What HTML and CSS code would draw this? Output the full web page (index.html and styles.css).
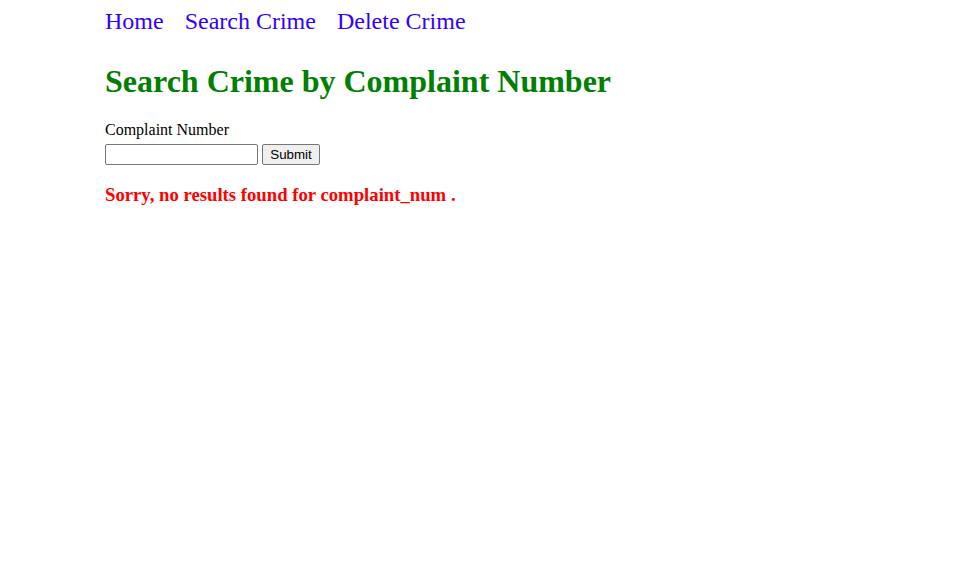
FILE: index.html
```html
<!DOCTYPE html>
<html>
<head>
<meta charset="utf-8">
<title>Search Crime</title>
<link rel="stylesheet" href="styles.css">
</head>
<body>
<div class="container">
  <nav class="nav">
    <a class="nav-link" href="#">Home</a>
    <a class="nav-link" href="#">Search Crime</a>
    <a class="nav-link" href="#">Delete Crime</a>
  </nav>
  <h1 class="title">Search Crime by Complaint Number</h1>
  <form class="form">
    <label class="label" for="cn">Complaint Number</label>
    <div class="row">
      <input class="text-input" type="text" id="cn" name="complaint_num">
      <button class="btn" type="submit">Submit</button>
    </div>
  </form>
  <h3 class="error">Sorry, no results found for complaint_num .</h3>
</div>
</body>
</html>
```

FILE: styles.css
```css
body {
  margin: 8px;
  font-family: "Liberation Serif", "Times New Roman", serif;
  font-size: 16px;
  color: #000;
  background: #fff;
}
.container {
  max-width: 746px;
  margin: 0 auto;
}
.nav {
  display: flex;
  gap: 21px;
  font-size: 24px;
}
.nav-link {
  color: #3300ff;
  text-decoration: none;
}
.title {
  color: #008000;
  font-size: 32px;
  font-weight: bold;
  margin: 28px 0 21px;
}
.form {
  margin: 0;
}
.label {
  display: block;
  font-size: 16px;
  line-height: 18px;
}
.row {
  display: flex;
  align-items: center;
  gap: 4px;
  margin-top: 5px;
}
.text-input {
  font-family: "Liberation Sans", Arial, sans-serif;
  font-size: 13.33px;
  width: 153px;
  height: 21px;
  box-sizing: border-box;
  border: 1px solid #767676;
  border-radius: 2px;
  padding: 1px 2px;
  margin: 0;
}
.btn {
  font-family: "Liberation Sans", Arial, sans-serif;
  font-size: 13.33px;
  width: 58px;
  height: 21px;
  box-sizing: border-box;
  padding: 1px 4px;
  margin: 0;
  border: 1px solid #767676;
  border-radius: 2px;
  background: #efefef;
  color: #000;
}
.error {
  color: #ff0000;
  font-size: 18.72px;
  font-weight: bold;
  margin: 19px 0;
}
```
